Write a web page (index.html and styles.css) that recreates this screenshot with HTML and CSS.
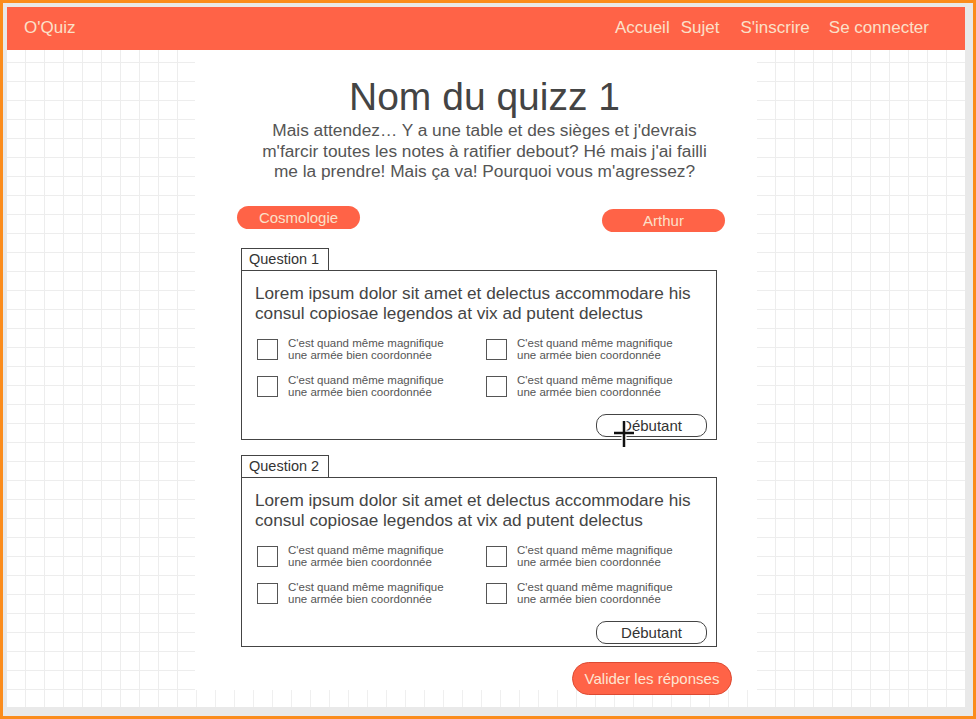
FILE: index.html
```html
<!DOCTYPE html>
<html lang="fr">
<head>
<meta charset="utf-8">
<title>O'Quiz</title>
<link rel="stylesheet" href="styles.css">
</head>
<body>
<div class="window">
  <div class="canvas">
    <header class="topbar">
      <div class="brand">O'Quiz</div>
      <nav class="nav">
        <a class="nav-link">Accueil</a>
        <a class="nav-link nav-sujet">Sujet</a>
        <a class="nav-link nav-inscrire">S'inscrire</a>
        <a class="nav-link nav-connect">Se connecter</a>
      </nav>
    </header>
    <div class="stage">
      <div class="grid-panel grid-left"></div>
      <main class="sheet">
        <div class="column">
          <h1 class="title">Nom du quizz 1</h1>
          <p class="intro">Mais attendez… Y a une table et des sièges et j'devrais m'farcir toutes les notes à ratifier debout? Hé mais j'ai failli me la prendre! Mais ça va! Pourquoi vous m'agressez?</p>
          <div class="tags">
            <span class="pill">Cosmologie</span>
            <span class="pill pill-author">Arthur</span>
          </div>

          <section class="question">
            <div class="q-tab">Question 1</div>
            <div class="q-box">
              <p class="q-text">Lorem ipsum dolor sit amet et delectus accommodare his consul copiosae legendos at vix ad putent delectus</p>
              <div class="choices">
                <label class="choice"><span class="check"></span><span class="choice-text">C'est quand même magnifique<br>une armée bien coordonnée</span></label>
                <label class="choice"><span class="check"></span><span class="choice-text">C'est quand même magnifique<br>une armée bien coordonnée</span></label>
                <label class="choice"><span class="check"></span><span class="choice-text">C'est quand même magnifique<br>une armée bien coordonnée</span></label>
                <label class="choice"><span class="check"></span><span class="choice-text">C'est quand même magnifique<br>une armée bien coordonnée</span></label>
              </div>
              <div class="level-row"><span class="level">Débutant</span></div>
              <svg class="cursor" width="24" height="30" viewBox="0 0 24 30">
                <path d="M12 1V29M1 14H23" stroke="#fff" stroke-width="5" fill="none"/>
                <path d="M12 2V28M2 14H22" stroke="#111" stroke-width="2.5" fill="none"/>
              </svg>
            </div>
          </section>

          <section class="question">
            <div class="q-tab">Question 2</div>
            <div class="q-box">
              <p class="q-text">Lorem ipsum dolor sit amet et delectus accommodare his consul copiosae legendos at vix ad putent delectus</p>
              <div class="choices">
                <label class="choice"><span class="check"></span><span class="choice-text">C'est quand même magnifique<br>une armée bien coordonnée</span></label>
                <label class="choice"><span class="check"></span><span class="choice-text">C'est quand même magnifique<br>une armée bien coordonnée</span></label>
                <label class="choice"><span class="check"></span><span class="choice-text">C'est quand même magnifique<br>une armée bien coordonnée</span></label>
                <label class="choice"><span class="check"></span><span class="choice-text">C'est quand même magnifique<br>une armée bien coordonnée</span></label>
              </div>
              <div class="level-row"><span class="level">Débutant</span></div>
            </div>
          </section>

          <div class="submit-row"><button class="submit">Valider les réponses</button></div>
        </div>
      </main>
      <div class="grid-panel grid-right"></div>
    </div>
  </div>
</div>
</body>
</html>
```

FILE: styles.css
```css
* { box-sizing: border-box; }

html, body {
  margin: 0;
  padding: 0;
}

body {
  background: #fb8c1c;
  width: 976px;
  height: 719px;
  padding: 3px 3px 3px 3px;
  font-family: "Liberation Sans", Arial, sans-serif;
  overflow: hidden;
}

.window {
  width: 970px;
  height: 713px;
  background: #e9e9e9;
  padding: 4px 8px 9px 4px;
}

.canvas {
  width: 958px;
  height: 700px;
  background: #fff;
  display: flex;
  flex-direction: column;
}

.topbar {
  height: 43px;
  flex: none;
  background: #ff6347;
  display: flex;
  align-items: center;
  justify-content: space-between;
  padding: 0 36px 0 17px;
  color: #fbe0c9;
  font-size: 17px;
}

.brand { padding-bottom: 1px; }

.nav {
  display: flex;
  align-items: center;
  padding-bottom: 1px;
}

.nav-link { color: #fbe0c9; text-decoration: none; }
.nav-sujet { margin-left: 11px; }
.nav-inscrire { margin-left: 21px; }
.nav-connect { margin-left: 19px; }

.stage {
  flex: 1;
  display: flex;
  background-color: #fff;
  background-image:
    linear-gradient(to right, #efefef 1px, transparent 1px),
    linear-gradient(to bottom, #efefef 1px, transparent 1px);
  background-size: 19px 19px;
  background-position: 18px 12px;
}

.grid-panel {
  background-image:
    linear-gradient(to right, #ededed 1px, transparent 1px),
    linear-gradient(to bottom, #ededed 1px, transparent 1px);
  background-size: 19px 19px;
  background-position: 18px 12px;
  background-color: #fff;
}

.grid-left { width: 188px; }
.grid-right { flex: 1; }

.sheet {
  width: 562px;
  height: 640px;
  background: #fff;
  padding-left: 42px;
}

.column {
  width: 495px;
  display: flex;
  flex-direction: column;
}

.title {
  margin: 24px 0 0;
  font-weight: normal;
  font-size: 39px;
  line-height: 45px;
  color: #444;
  text-align: center;
}

.intro {
  margin: 1px 0 0;
  font-size: 17.3px;
  line-height: 20.5px;
  color: #555;
  text-align: center;
  padding: 0 18px;
}

.tags {
  margin-top: 24px;
  width: 488px;
  display: flex;
  justify-content: space-between;
  align-items: flex-start;
}

.pill {
  width: 123px;
  height: 23px;
  border-radius: 12px;
  background: #ff6347;
  color: #fbe0c9;
  font-size: 15px;
  display: flex;
  align-items: center;
  justify-content: center;
}

.pill-author { margin-top: 3px; }

.question {
  margin-left: 4px;
  width: 476px;
  margin-top: 16px;
  display: flex;
  flex-direction: column;
}

.question + .question { margin-top: 15px; }

.q-tab {
  align-self: flex-start;
  width: 88px;
  height: 22px;
  border: 1px solid #444;
  border-bottom: none;
  font-size: 14.5px;
  color: #333;
  padding-left: 7px;
  line-height: 20px;
}

.q-box {
  position: relative;
  border: 1px solid #444;
  padding: 12px 9px 2px 13px;
}

.q-text {
  margin: 0;
  font-size: 17.2px;
  line-height: 20px;
  color: #444;
}

.choices {
  margin-top: 16px;
  display: grid;
  grid-template-columns: 229px 229px;
  row-gap: 16px;
  padding-left: 2px;
}

.choice {
  display: flex;
  align-items: center;
  height: 21px;
}

.check {
  width: 21px;
  height: 21px;
  border: 1.5px solid #555;
  flex: none;
}

.choice-text {
  margin-left: 10px;
  font-size: 11.5px;
  line-height: 12px;
  color: #555;
}

.level-row {
  margin-top: 17px;
  display: flex;
  justify-content: flex-end;
}

.level {
  width: 111px;
  height: 23px;
  border: 1px solid #444;
  border-radius: 10px;
  font-size: 15px;
  color: #333;
  display: flex;
  align-items: center;
  justify-content: center;
}

.cursor {
  position: absolute;
  left: 370px;
  top: 148px;
}

.submit-row {
  margin-top: 15px;
  display: flex;
  justify-content: flex-end;
}

.submit {
  width: 160px;
  height: 33px;
  border-radius: 17px;
  background: #ff6347;
  border: 1px solid #dd4a32;
  color: #fde6d2;
  font-family: "Liberation Sans", Arial, sans-serif;
  font-size: 15px;
  padding: 0;
}
```
